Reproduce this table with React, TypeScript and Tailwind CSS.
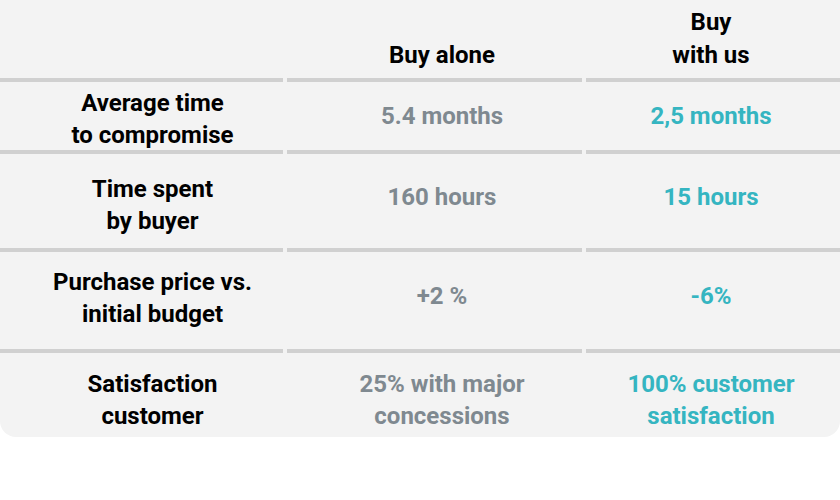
import React from "react";

const cols = "grid grid-cols-[283px_294px_254px] gap-x-[5px]";

function Sep() {
  return (
    <div className="grid grid-cols-[283px_295px_254px] gap-x-[4px] h-[4px]">
      <div className="bg-[#d0d0d0]" />
      <div className="bg-[#d0d0d0]" />
      <div className="bg-[#d0d0d0]" />
    </div>
  );
}

type Row = {
  label: string[];
  alone: string[];
  us: string[];
  h: string;
  lp: string;
  sp: string;
};

const rows: Row[] = [
  {
    label: ["Average time", "to compromise"],
    alone: ["5.4 months"],
    us: ["2,5 months"],
    h: "h-[68px]",
    lp: "pt-[5px]",
    sp: "pb-[1px]",
  },
  {
    label: ["Time spent", "by buyer"],
    alone: ["160 hours"],
    us: ["15 hours"],
    h: "h-[94px]",
    lp: "pt-[8px]",
    sp: "pb-[8px]",
  },
  {
    label: ["Purchase price vs.", "initial budget"],
    alone: ["+2 %"],
    us: ["-6%"],
    h: "h-[97px]",
    lp: "pb-[6px]",
    sp: "pb-[10px]",
  },
];

function Lines({ lines }: { lines: string[] }) {
  return (
    <>
      {lines.map((l, i) => (
        <div key={i}>{l}</div>
      ))}
    </>
  );
}

export default function App() {
  return (
    <div
      className="w-[840px] h-[500px] bg-white text-[24px] leading-[32px] font-bold"
      style={{ fontFamily: "Roboto, 'Liberation Sans', sans-serif" }}
    >
      <div className="bg-[#f3f3f3] rounded-b-[16px] h-[437px] flex flex-col">
        <div className={`${cols} h-[78px] items-end pb-[7px]`}>
          <div />
          <div className="text-center pl-[14px] text-black">Buy alone</div>
          <div className="text-center pr-[6px] text-black">
            <div className="relative top-[-1px]">Buy</div>
            <div>with us</div>
          </div>
        </div>
        {rows.map((r, i) => (
          <React.Fragment key={i}>
            <Sep />
            <div className={`${cols} ${r.h} items-center`}>
              <div className={`text-center pl-[22px] text-black ${r.lp}`}>
                <Lines lines={r.label} />
              </div>
              <div className={`text-center pl-[14px] text-[#7f8990] ${r.sp}`}>
                <Lines lines={r.alone} />
              </div>
              <div className={`text-center pr-[6px] text-[#35b5c1] ${r.sp}`}>
                <Lines lines={r.us} />
              </div>
            </div>
          </React.Fragment>
        ))}
        <Sep />
        <div className={`${cols} flex-1 items-center pt-[9px]`}>
          <div className="text-center pl-[22px] text-black">
            <div>Satisfaction</div>
            <div>customer</div>
          </div>
          <div className="text-center pl-[14px] text-[#7f8990]">
            <div>25% with major</div>
            <div>concessions</div>
          </div>
          <div className="text-center pr-[6px] text-[#35b5c1]">
            <div>100% customer</div>
            <div>satisfaction</div>
          </div>
        </div>
      </div>
    </div>
  );
}
